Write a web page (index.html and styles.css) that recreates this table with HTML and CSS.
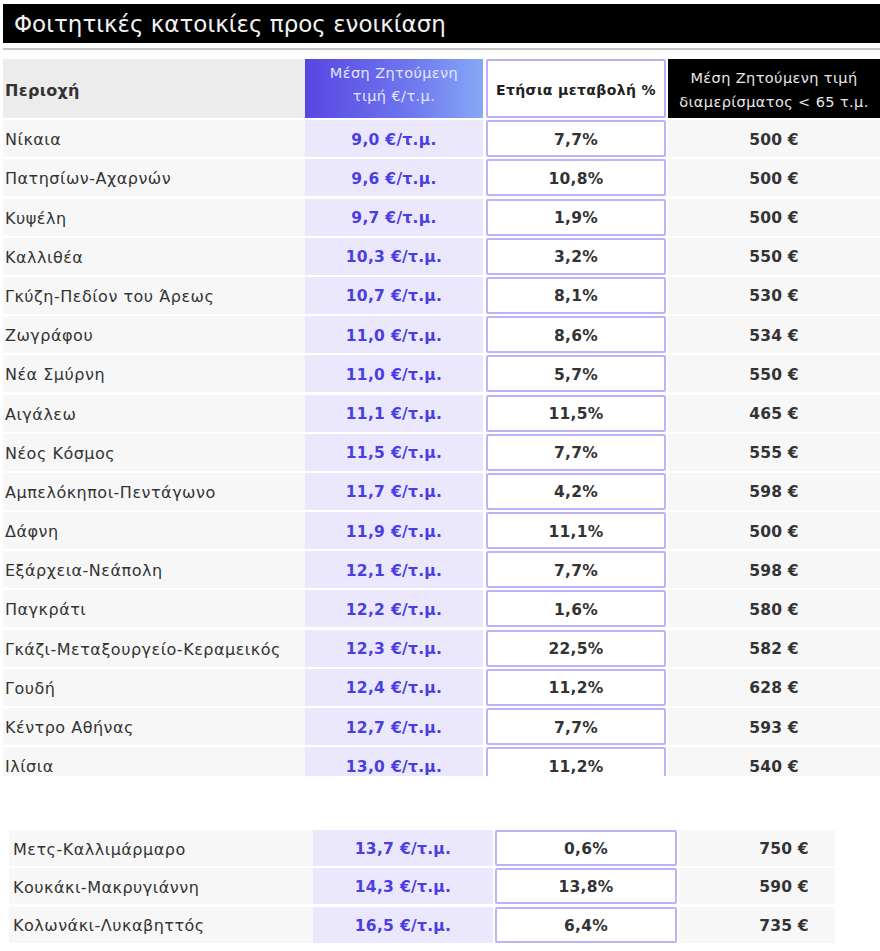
FILE: index.html
```html
<!DOCTYPE html>
<html lang="el">
<head>
<meta charset="utf-8">
<link rel="stylesheet" href="styles.css">
</head>
<body>
<div class="page">
  <h1 class="title">Φοιτητικές κατοικίες προς ενοικίαση</h1>
  <div class="rule"></div>
  <div class="clip">
    <div class="grid main">
      <div class="h h-area">Περιοχή</div>
      <div class="h h-price">Μέση Ζητούμενη<br>τιμή €/τ.μ.</div>
      <div class="h h-change"><span>Ετήσια μεταβολή %</span></div>
      <div class="h h-flat">Μέση Ζητούμενη τιμή<br>διαμερίσματος &lt; 65 τ.μ.</div>

      <div class="c area">Νίκαια</div><div class="c price">9,0 €/τ.μ.</div><div class="c change"><span>7,7%</span></div><div class="c flat">500 €</div>
      <div class="c area">Πατησίων-Αχαρνών</div><div class="c price">9,6 €/τ.μ.</div><div class="c change"><span>10,8%</span></div><div class="c flat">500 €</div>
      <div class="c area">Κυψέλη</div><div class="c price">9,7 €/τ.μ.</div><div class="c change"><span>1,9%</span></div><div class="c flat">500 €</div>
      <div class="c area">Καλλιθέα</div><div class="c price">10,3 €/τ.μ.</div><div class="c change"><span>3,2%</span></div><div class="c flat">550 €</div>
      <div class="c area">Γκύζη-Πεδίον του Άρεως</div><div class="c price">10,7 €/τ.μ.</div><div class="c change"><span>8,1%</span></div><div class="c flat">530 €</div>
      <div class="c area">Ζωγράφου</div><div class="c price">11,0 €/τ.μ.</div><div class="c change"><span>8,6%</span></div><div class="c flat">534 €</div>
      <div class="c area">Νέα Σμύρνη</div><div class="c price">11,0 €/τ.μ.</div><div class="c change"><span>5,7%</span></div><div class="c flat">550 €</div>
      <div class="c area">Αιγάλεω</div><div class="c price">11,1 €/τ.μ.</div><div class="c change"><span>11,5%</span></div><div class="c flat">465 €</div>
      <div class="c area">Νέος Κόσμος</div><div class="c price">11,5 €/τ.μ.</div><div class="c change"><span>7,7%</span></div><div class="c flat">555 €</div>
      <div class="c area">Αμπελόκηποι-Πεντάγωνο</div><div class="c price">11,7 €/τ.μ.</div><div class="c change"><span>4,2%</span></div><div class="c flat">598 €</div>
      <div class="c area">Δάφνη</div><div class="c price">11,9 €/τ.μ.</div><div class="c change"><span>11,1%</span></div><div class="c flat">500 €</div>
      <div class="c area">Εξάρχεια-Νεάπολη</div><div class="c price">12,1 €/τ.μ.</div><div class="c change"><span>7,7%</span></div><div class="c flat">598 €</div>
      <div class="c area">Παγκράτι</div><div class="c price">12,2 €/τ.μ.</div><div class="c change"><span>1,6%</span></div><div class="c flat">580 €</div>
      <div class="c area">Γκάζι-Μεταξουργείο-Κεραμεικός</div><div class="c price">12,3 €/τ.μ.</div><div class="c change"><span>22,5%</span></div><div class="c flat">582 €</div>
      <div class="c area">Γουδή</div><div class="c price">12,4 €/τ.μ.</div><div class="c change"><span>11,2%</span></div><div class="c flat">628 €</div>
      <div class="c area">Κέντρο Αθήνας</div><div class="c price">12,7 €/τ.μ.</div><div class="c change"><span>7,7%</span></div><div class="c flat">593 €</div>
      <div class="c area">Ιλίσια</div><div class="c price">13,0 €/τ.μ.</div><div class="c change"><span>11,2%</span></div><div class="c flat">540 €</div>
    </div>
  </div>

  <div class="grid extra">
    <div class="c area">Μετς-Καλλιμάρμαρο</div><div class="c price">13,7 €/τ.μ.</div><div class="c change"><span>0,6%</span></div><div class="c flat">750 €</div>
    <div class="c area">Κουκάκι-Μακρυγιάννη</div><div class="c price">14,3 €/τ.μ.</div><div class="c change"><span>13,8%</span></div><div class="c flat">590 €</div>
    <div class="c area">Κολωνάκι-Λυκαβηττός</div><div class="c price">16,5 €/τ.μ.</div><div class="c change"><span>6,4%</span></div><div class="c flat">735 €</div>
  </div>
</div>
</body>
</html>
```

FILE: styles.css
```css
* { box-sizing: border-box; }
html, body { margin: 0; padding: 0; background: #fff; }
body {
  font-family: "DejaVu Sans", "Noto Sans", sans-serif;
  color: #333;
  width: 880px;
}
.page { padding-top: 4px; }

.title {
  margin: 0 0 0 3px;
  height: 39px;
  background: #000;
  color: #f2f2f2;
  font-weight: 400;
  font-size: 23px;
  line-height: 40px;
  padding-left: 11px;
}
.rule {
  margin: 5px 0 0 3px;
  height: 2px;
  background: #c4c4c4;
}

.clip {
  margin-top: 9px;
  height: 717px;
  overflow: hidden;
}

.grid { display: grid; }
.main {
  margin-left: 3px;
  grid-template-columns: 302px 178px 185px 212px;
  grid-template-rows: 59px;
  grid-auto-rows: 37px;
  row-gap: 2.2px;
}
.extra {
  margin: 54px 0 0 9px;
  width: 826px;
  grid-template-columns: 304px 180px 184px 158px;
  grid-auto-rows: 36px;
  row-gap: 2.4px;
}

.h { display: flex; align-items: center; font-size: 14.5px; letter-spacing: 0.4px; }
.h-area {
  background: #ececec;
  font-weight: 700;
  font-size: 16px;
  letter-spacing: 0.3px;
  padding: 3px 0 0 2px;
  color: #333;
}
.h-price {
  background: linear-gradient(90deg, #5846e4 0%, #6f78ee 60%, #86a8f6 100%);
  color: #e4e6ff;
  justify-content: center;
  text-align: center;
  line-height: 23px;
  padding-bottom: 8px;
}
.h-change { margin-left: 3px; margin-right: 2px; }
.h-change span {
  flex: 1;
  align-self: stretch;
  display: flex;
  align-items: center;
  justify-content: center;
  border: 2px solid #b7aefc;
  border-radius: 2px;
  background: #fff;
  font-weight: 700;
  font-size: 14px;
  padding-top: 2px;
  color: #222;
}
.h-flat {
  background: #000;
  color: #e8e8e8;
  justify-content: center;
  text-align: center;
  line-height: 24px;
  padding-top: 2px;
}

.c {
  display: flex;
  align-items: center;
  padding-top: 2px;
  font-size: 15.5px;
  font-weight: 700;
  letter-spacing: 0.2px;
}
.area { background: #f7f7f7; padding-left: 2px; font-weight: 400; font-size: 16px; letter-spacing: 0.5px; color: #333; }
.price { background: #ebe8fe; color: #4a3ee3; justify-content: center; letter-spacing: 0.3px; }
.change { margin-left: 3px; margin-right: 2px; padding-top: 0; }
.change span {
  flex: 1;
  align-self: stretch;
  display: flex;
  align-items: center;
  justify-content: center;
  padding-top: 2px;
  border: 2px solid #bcb3fb;
  border-radius: 2px;
  background: #fff;
  color: #333;
}
.flat { background: #f7f7f7; justify-content: center; color: #333; }

.extra .area { padding-left: 4px; }
.extra .change { margin-left: 2px; margin-right: 0; }
.extra .flat { margin-left: 2px; padding-left: 54px; }
```
